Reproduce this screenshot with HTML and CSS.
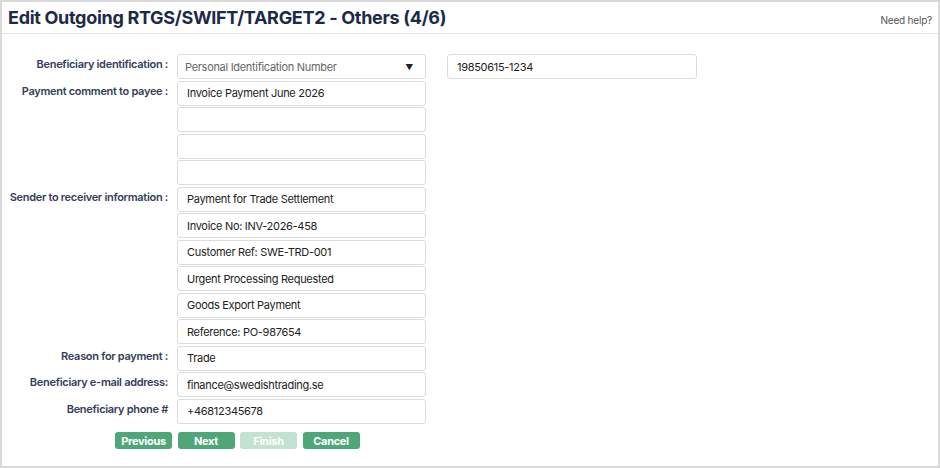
FILE: index.html
```html
<!DOCTYPE html>
<html lang="en">
<head>
    <meta charset="UTF-8">
    <meta name="viewport" content="width=device-width, initial-scale=1.0">
    <title>Edit Outgoing RTGS/SWIFT/TARGET2 - Others</title>
    <link rel="stylesheet" href="styles.css">
</head>
<body>
    <div class="header">
        <h1 class="title">Edit Outgoing RTGS/SWIFT/TARGET2 - Others (4/6)</h1>
        <a class="help" href="#">Need help?</a>
    </div>

    <div class="form">
        <div class="row">
            <label class="label">Beneficiary identification :</label>
            <div class="fields">
                <div class="select">
                    <span>Personal Identification Number</span>
                    <span class="arrow">▼</span>
                </div>
            </div>
            <input class="input extra" type="text" value="19850615-1234">
        </div>
        <div class="row">
            <label class="label">Payment comment to payee :</label>
            <div class="fields">
                <input class="input" type="text" value="Invoice Payment June 2026">
                <input class="input" type="text" value="">
                <input class="input" type="text" value="">
                <input class="input" type="text" value="">
            </div>
        </div>
        <div class="row">
            <label class="label">Sender to receiver information :</label>
            <div class="fields">
                <input class="input" type="text" value="Payment for Trade Settlement">
                <input class="input" type="text" value="Invoice No: INV-2026-458">
                <input class="input" type="text" value="Customer Ref: SWE-TRD-001">
                <input class="input" type="text" value="Urgent Processing Requested">
                <input class="input" type="text" value="Goods Export Payment">
                <input class="input" type="text" value="Reference: PO-987654">
            </div>
        </div>
        <div class="row">
            <label class="label">Reason for payment :</label>
            <div class="fields">
                <input class="input" type="text" value="Trade">
            </div>
        </div>
        <div class="row">
            <label class="label">Beneficiary e-mail address:</label>
            <div class="fields">
                <input class="input" type="text" value="finance@swedishtrading.se">
            </div>
        </div>
        <div class="row">
            <label class="label">Beneficiary phone #</label>
            <div class="fields">
                <input class="input" type="text" value="+46812345678">
            </div>
        </div>

        <div class="buttons">
            <button class="btn">Previous</button>
            <button class="btn">Next</button>
            <button class="btn disabled" disabled>Finish</button>
            <button class="btn">Cancel</button>
        </div>
    </div>
</body>
</html>
```

FILE: styles.css
```css
* {
    box-sizing: border-box;
}

body {
    margin: 0;
    height: 100vh;
    border: 2px solid #d9d9d9;
    background: #fff;
    font-family: Inter, "Noto Sans", sans-serif;
    color: #222;
}

.header {
    display: flex;
    justify-content: space-between;
    align-items: center;
    height: 32px;
    padding: 0 6px 0 6px;
    border-bottom: 1px solid #e4e4e4;
}

.title {
    margin: 0;
    font-size: 18px;
    font-weight: 700;
    color: #1d2947;
    letter-spacing: -0.3px;
}

.help {
    font-size: 10px;
    color: #555;
    text-decoration: none;
    margin-top: 4px;
    letter-spacing: -0.2px;
}

.form {
    display: flex;
    flex-direction: column;
    gap: 1.5px;
    padding-top: 20px;
}

.row {
    display: flex;
    align-items: flex-start;
}

.label {
    width: 166px;
    margin-right: 9px;
    padding-top: 3px;
    text-align: right;
    white-space: nowrap;
    font-size: 11px;
    line-height: 14px;
    font-weight: 600;
    letter-spacing: -0.3px;
    color: #353d5c;
}

.fields {
    display: flex;
    flex-direction: column;
    gap: 1.5px;
    width: 249px;
}

.input,
.select {
    height: 25px;
    width: 100%;
    border: 1px solid #dcdcdc;
    border-radius: 3px;
    padding: 0 9px;
    font-family: Inter, "Noto Sans", sans-serif;
    font-size: 11px;
    letter-spacing: -0.3px;
    color: #222;
    background: #fff;
}

.select {
    display: flex;
    justify-content: space-between;
    align-items: center;
    color: #666;
    padding: 0 12px 0 7px;
}

.select .arrow {
    font-size: 8px;
    color: #222;
}

.input.extra {
    width: 250px;
    margin-left: 21px;
}

.buttons {
    display: flex;
    gap: 5.5px;
    padding-left: 113px;
    margin-top: 7px;
}

.btn {
    width: 57px;
    height: 17px;
    padding: 0;
    border: none;
    border-radius: 3px;
    background: #4fa779;
    color: #fff;
    font-family: Inter, "Noto Sans", sans-serif;
    font-size: 11px;
    font-weight: 700;
    letter-spacing: -0.3px;
    cursor: pointer;
}

.btn.disabled {
    background: #c3e2d1;
    cursor: default;
}
```
